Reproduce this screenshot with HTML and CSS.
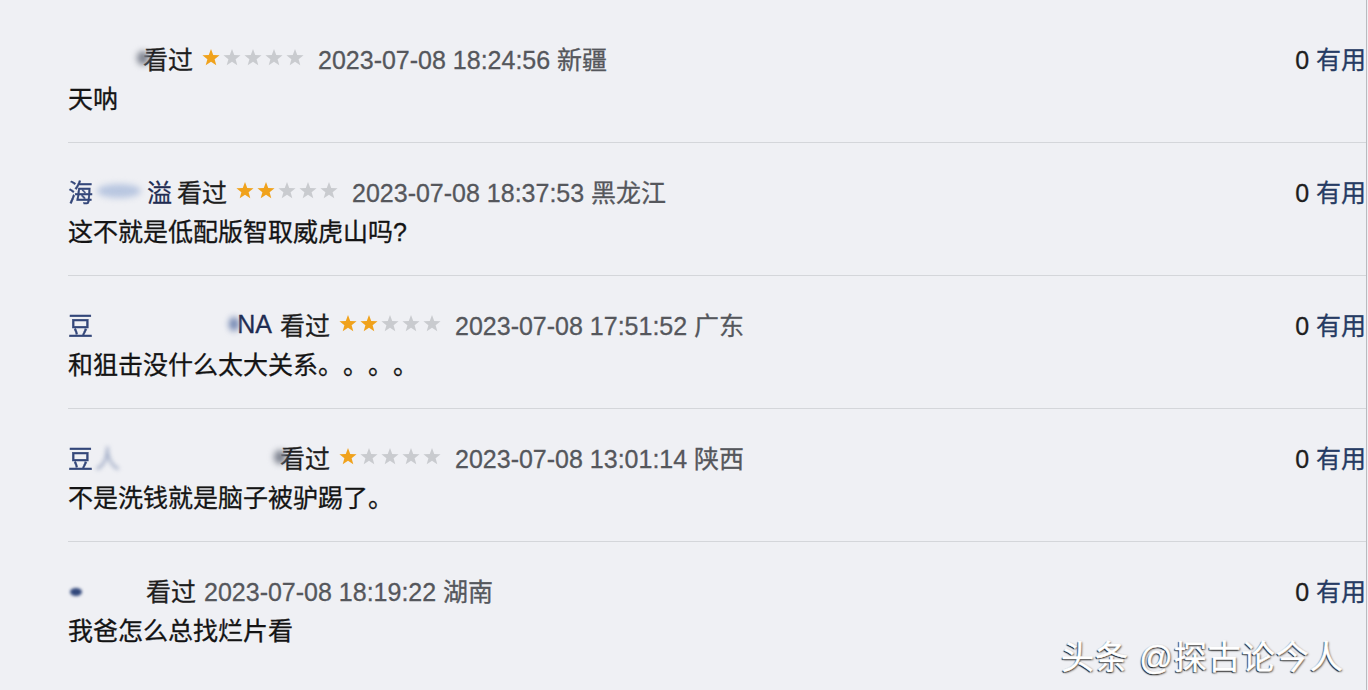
FILE: index.html
```html
<!doctype html>
<html>
<head>
    <meta charset="utf-8"/>
    <title>短评</title>
    <link rel="stylesheet" href="styles.css">
</head>
<body>
    <svg class="defs" width="0" height="0">
        <symbol id="star" viewBox="0 0 20 20">
            <polygon points="10,1 12.23,6.93 18.56,7.22 13.61,11.17 15.29,17.28 10,13.8 4.71,17.28 6.39,11.17 1.44,7.22 7.77,6.93"/>
        </symbol>
    </svg>

    <div class="comments">
        <div class="comment">
            <div class="meta">
                <span class="user u1"><span class="smear s-end"></span></span>
                <span class="status">看过</span>
                <svg class="rating" width="104" height="20" viewBox="0 0 104 20">
                    <use href="#star" x="0" width="20" height="20" class="on"/>
                    <use href="#star" x="21" width="20" height="20"/>
                    <use href="#star" x="42" width="20" height="20"/>
                    <use href="#star" x="63" width="20" height="20"/>
                    <use href="#star" x="84" width="20" height="20"/>
                </svg>
                <span class="time">2023-07-08 18:24:56 新疆</span>
                <span class="votes"><span class="count">0</span> 有用</span>
            </div>
            <p class="text">天呐</p>
        </div>

        <div class="comment">
            <div class="meta">
                <span class="user u2"><span class="fade">海</span><span class="smear s-mid"></span>溢</span>
                <span class="status">看过</span>
                <svg class="rating" width="104" height="20" viewBox="0 0 104 20">
                    <use href="#star" x="0" width="20" height="20" class="on"/>
                    <use href="#star" x="21" width="20" height="20" class="on"/>
                    <use href="#star" x="42" width="20" height="20"/>
                    <use href="#star" x="63" width="20" height="20"/>
                    <use href="#star" x="84" width="20" height="20"/>
                </svg>
                <span class="time">2023-07-08 18:37:53 黑龙江</span>
                <span class="votes"><span class="count">0</span> 有用</span>
            </div>
            <p class="text">这不就是低配版智取威虎山吗?</p>
        </div>

        <div class="comment">
            <div class="meta">
                <span class="user u3"><span class="fade">豆</span><span class="spacer"></span><span class="smear s-dot"></span><span class="tail">NA</span></span>
                <span class="status">看过</span>
                <svg class="rating" width="104" height="20" viewBox="0 0 104 20">
                    <use href="#star" x="0" width="20" height="20" class="on"/>
                    <use href="#star" x="21" width="20" height="20" class="on"/>
                    <use href="#star" x="42" width="20" height="20"/>
                    <use href="#star" x="63" width="20" height="20"/>
                    <use href="#star" x="84" width="20" height="20"/>
                </svg>
                <span class="time">2023-07-08 17:51:52 广东</span>
                <span class="votes"><span class="count">0</span> 有用</span>
            </div>
            <p class="text">和狙击没什么太大关系。。。。</p>
        </div>

        <div class="comment">
            <div class="meta">
                <span class="user u3"><span class="fade">豆</span><span class="ghost">人</span><span class="spacer"></span><span class="smear s-end"></span></span>
                <span class="status">看过</span>
                <svg class="rating" width="104" height="20" viewBox="0 0 104 20">
                    <use href="#star" x="0" width="20" height="20" class="on"/>
                    <use href="#star" x="21" width="20" height="20"/>
                    <use href="#star" x="42" width="20" height="20"/>
                    <use href="#star" x="63" width="20" height="20"/>
                    <use href="#star" x="84" width="20" height="20"/>
                </svg>
                <span class="time">2023-07-08 13:01:14 陕西</span>
                <span class="votes"><span class="count">0</span> 有用</span>
            </div>
            <p class="text">不是洗钱就是脑子被驴踢了。</p>
        </div>

        <div class="comment">
            <div class="meta">
                <span class="user u5"><span class="smear s-tick"></span></span>
                <span class="status">看过</span>
                <span class="time">2023-07-08 18:19:22 湖南</span>
                <span class="votes"><span class="count">0</span> 有用</span>
            </div>
            <p class="text">我爸怎么总找烂片看</p>
        </div>
    </div>

    <div class="mark">头条 @探古论今人</div>
</body>
</html>
```

FILE: styles.css
```css
html {
    font-family:"Liberation Sans","Noto Sans CJK SC",sans-serif;
    text-spacing-trim:space-all;
}
body {
    margin:0;
    height:690px;
    overflow:hidden;
    background-color:#eff0f4;
    color:#1a1a1a;
}
* {
    box-sizing:border-box;
}
.defs { position:absolute; }

.comments {
    padding:10px 0 0 68px;
    margin-right:1px;
    height:690px;
    border-right:1px solid #b9bbbf;
}
.comment {
    padding:32px 0 27px;
    border-bottom:1px solid #d4d6da;
}
.comment:last-child { border-bottom:none; }

.meta {
    display:flex;
    align-items:center;
    height:32px;
    font-size:25px;
    -webkit-text-stroke:.3px currentColor;
}
.user {
    display:flex;
    align-items:center;
    color:#1f2c52;
}
.u1 { width:75px; justify-content:flex-end; }
.u2 { width:109px; }
.u3 { width:212px; }
.u5 { width:78px; }

.spacer { flex:1; }
.tail { margin-right:8px; }
.fade { color:#34477a; filter:blur(.6px); }
.ghost { color:#9aa6c2; filter:blur(2px); margin-left:2px; }
.smear {
    display:inline-block;
    height:14px;
    border-radius:50%;
    filter:blur(3px);
}
.s-end { width:12px; background-color:#7a7f8c; margin-right:-6px; }
.s-mid { width:44px; margin:0 6px 0 4px; background-color:#b8c6e0; }
.s-dot { width:10px; background-color:#6f84b0; margin-right:-2px; }
.s-tick { width:12px; height:8px; background-color:#30467a; filter:blur(1.5px); margin:4px 0 0 2px; }

.status {
    color:#1e1e1e;
    margin-right:8px;
}
.rating {
    margin-right:13px;
    fill:#c9cbcf;
}
.rating .on { fill:#f0a21c; }
.time {
    color:#55575c;
}
.votes {
    margin-left:auto;
    color:#263b63;
}
.count { color:#1e1e1e; }

.text {
    margin:9px 0 0;
    height:32px;
    line-height:32px;
    font-size:25px;
    color:#141414;
    -webkit-text-stroke:.3px currentColor;
}

.mark {
    position:absolute;
    left:1061px;
    top:631px;
    font-size:33px;
    color:#ffffff;
    -webkit-text-stroke:.5px #ffffff;
    text-shadow:-1px 1px 1px #1e1e1e, 1px 1px 2px #555555;
    letter-spacing:1px;
}
```
